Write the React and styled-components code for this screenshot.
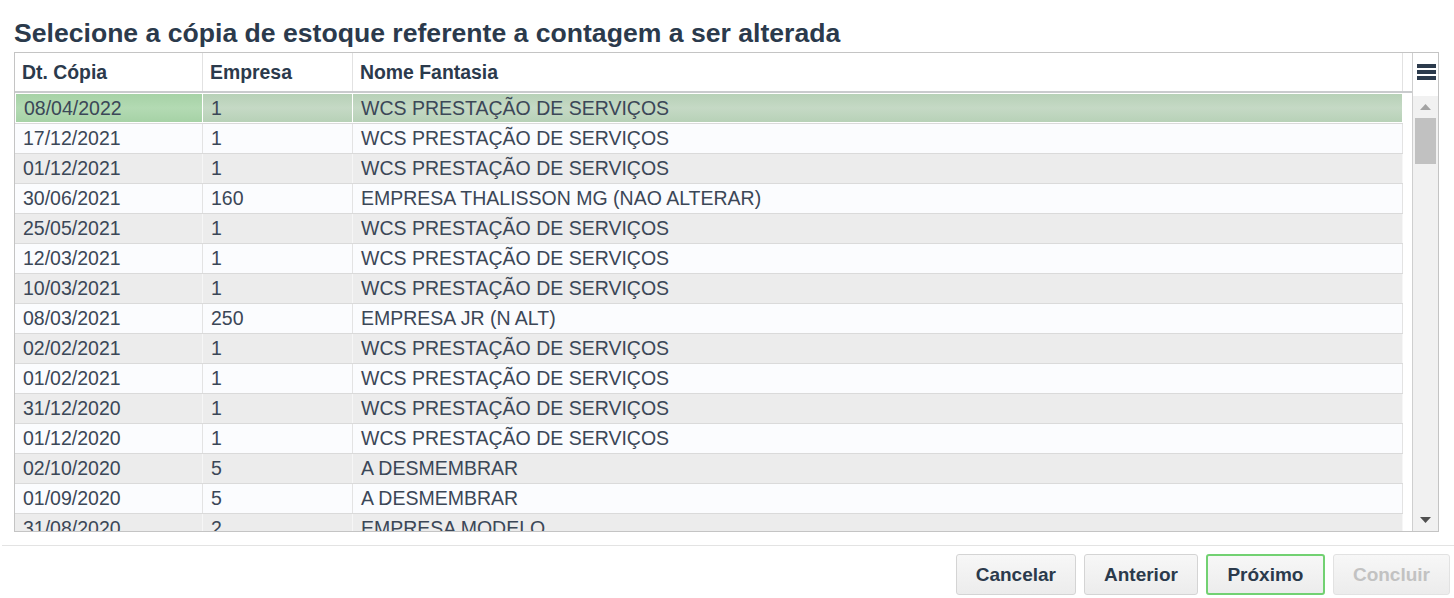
import React from "react";
import styled, { createGlobalStyle, css } from "styled-components";

const Global = createGlobalStyle`
  html, body { margin: 0; padding: 0; background: #ffffff; }
  body { font-family: "Liberation Sans", Arial, sans-serif; overflow: hidden; }
  * { box-sizing: border-box; }
`;

const Page = styled.div`
  width: 1454px;
  height: 598px;
  padding-top: 17px;
  display: flex;
  flex-direction: column;
`;

const Title = styled.h1`
  margin: 0;
  padding-left: 14px;
  font-size: 26.6px;
  line-height: 32px;
  font-weight: 700;
  color: #2b3a4c;
`;

const Grid = styled.div`
  margin: 3px 0 0 14px;
  width: 1425px;
  height: 480px;
  border: 1px solid #c4c4c4;
  display: flex;
  background: #ffffff;
`;

const Main = styled.div`
  width: 1397px;
  display: flex;
  flex-direction: column;
  overflow: hidden;
`;

const HeaderRow = styled.div`
  display: flex;
  height: 40px;
  flex: none;
  border-bottom: 2px solid #c9cbcd;
  padding-right: 9px;
`;

const cols = [188, 150, 1050];

const HeadCell = styled.div`
  width: ${(p) => p.$w}px;
  flex: none;
  display: flex;
  align-items: center;
  padding-left: 7px;
  font-size: 19.4px;
  font-weight: 700;
  color: #2b3a4c;
  border-right: 1px solid #e2e2e2;
  white-space: nowrap;
`;

const Body = styled.div`
  flex: 1;
  overflow: hidden;
  padding-right: 9px;
`;

const Row = styled.div`
  display: flex;
  height: ${(p) => (p.$selected ? 31 : 30)}px;
  border-bottom: 1px solid #dadada;
  background: ${(p) => (p.$alt ? "#ececec" : "#fbfcfe")};
`;

const Cell = styled.div`
  width: ${(p) => p.$w}px;
  flex: none;
  display: flex;
  align-items: center;
  padding-left: 8px;
  font-size: 19.5px;
  color: #3b4757;
  white-space: nowrap;
  overflow: hidden;
  border-right: 1px solid ${(p) => (p.$alt ? "#f6f6f6" : "#e3e3e3")};
  ${(p) =>
    p.$selected &&
    css`
      border: 1px solid #ffffff;
      border-left-width: ${p.$first ? 1 : 0}px;
      background: ${p.$focus
        ? "linear-gradient(#a6d2a6, #b3dab3 50%, #a6d2a6)"
        : "linear-gradient(#b7d1b7, #c5d9c5 50%, #b7d1b7)"};
    `}
`;

const Side = styled.div`
  width: 26px;
  flex: none;
  border-left: 1px solid #cfcfcf;
  display: flex;
  flex-direction: column;
`;

const MenuBox = styled.div`
  height: 43px;
  flex: none;
  display: flex;
  align-items: center;
  justify-content: center;
  padding-bottom: 5px;
  padding-left: 1px;
`;

const Track = styled.div`
  flex: 1;
  background: #f1f1f1;
  display: flex;
  flex-direction: column;
  align-items: center;
`;

const ArrowBtn = styled.div`
  height: 22px;
  width: 100%;
  flex: none;
  display: flex;
  align-items: center;
  justify-content: center;
`;

const Thumb = styled.div`
  width: 21px;
  height: 46px;
  background: #c1c1c1;
  flex: none;
`;

const Spacer = styled.div`
  flex: 1;
`;

const Footer = styled.div`
  margin: 13px 0 0 2px;
  border-top: 1px solid #e3e3e3;
  padding: 8px 4px 0 0;
  display: flex;
  justify-content: flex-end;
  gap: 8px;
`;

const Button = styled.button`
  height: 41px;
  padding: 0 19px;
  padding: 0 ${(p) => (p.$primary ? 19.5 : 19)}px;
  border: ${(p) => (p.$primary ? "2px solid #72d172" : "1px solid #d4d4d4")};
  border-color: ${(p) => (p.$disabled ? "#e2e2e2" : undefined)};
  border-radius: 3px;
  background: linear-gradient(#f7f7f7, #ececec);
  font-family: "Liberation Sans", Arial, sans-serif;
  font-size: 19px;
  font-weight: 700;
  color: ${(p) => (p.$disabled ? "#c2c2c2" : "#2b3a4c")};
  cursor: pointer;
`;

const W = "WCS PRESTAÇÃO DE SERVIÇOS";
const rows = [
  ["08/04/2022", "1", W],
  ["17/12/2021", "1", W],
  ["01/12/2021", "1", W],
  ["30/06/2021", "160", "EMPRESA THALISSON MG (NAO ALTERAR)"],
  ["25/05/2021", "1", W],
  ["12/03/2021", "1", W],
  ["10/03/2021", "1", W],
  ["08/03/2021", "250", "EMPRESA JR (N ALT)"],
  ["02/02/2021", "1", W],
  ["01/02/2021", "1", W],
  ["31/12/2020", "1", W],
  ["01/12/2020", "1", W],
  ["02/10/2020", "5", "A DESMEMBRAR"],
  ["01/09/2020", "5", "A DESMEMBRAR"],
  ["31/08/2020", "2", "EMPRESA MODELO"],
];

const Hamburger = () => (
  <svg width="19" height="16" viewBox="0 0 19 16">
    <rect x="0" y="0" width="19" height="4" fill="#2b3a4c" />
    <rect x="0" y="6" width="19" height="4" fill="#2b3a4c" />
    <rect x="0" y="12" width="19" height="4" fill="#2b3a4c" />
  </svg>
);

const Tri = ({ down, color }) => (
  <svg width="11" height="6" viewBox="0 0 11 6">
    <polygon points={down ? "0,0 11,0 5.5,6" : "0,6 11,6 5.5,0"} fill={color} />
  </svg>
);

export default function App() {
  return (
    <>
      <Global />
      <Page>
        <Title>Selecione a cópia de estoque referente a contagem a ser alterada</Title>
        <Grid>
          <Main>
            <HeaderRow>
              <HeadCell $w={cols[0]}>Dt. Cópia</HeadCell>
              <HeadCell $w={cols[1]}>Empresa</HeadCell>
              <HeadCell $w={cols[2]}>Nome Fantasia</HeadCell>
            </HeaderRow>
            <Body>
              {rows.map((r, i) => {
                const sel = i === 0;
                const alt = i % 2 === 0 && !sel;
                return (
                  <Row key={i} $alt={alt} $selected={sel}>
                    {r.map((v, j) => (
                      <Cell
                        key={j}
                        $w={cols[j]}
                        $alt={alt}
                        $selected={sel}
                        $first={j === 0}
                        $focus={sel && j === 0}
                      >
                        {v}
                      </Cell>
                    ))}
                  </Row>
                );
              })}
            </Body>
          </Main>
          <Side>
            <MenuBox>
              <Hamburger />
            </MenuBox>
            <Track>
              <ArrowBtn>
                <Tri color="#a3a3a3" />
              </ArrowBtn>
              <Thumb />
              <Spacer />
              <ArrowBtn>
                <Tri down color="#505050" />
              </ArrowBtn>
            </Track>
          </Side>
        </Grid>
        <Footer>
          <Button>Cancelar</Button>
          <Button>Anterior</Button>
          <Button $primary>Próximo</Button>
          <Button $disabled>Concluir</Button>
        </Footer>
      </Page>
    </>
  );
}
